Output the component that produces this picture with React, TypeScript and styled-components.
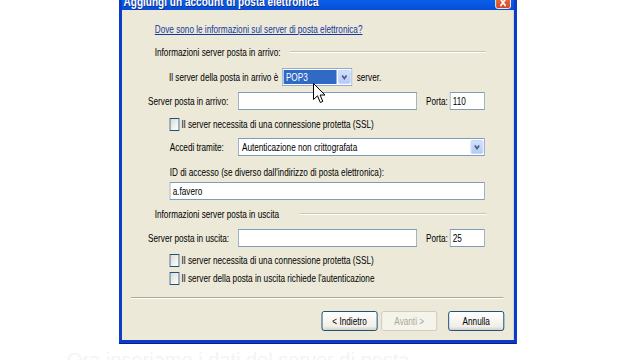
import React from 'react'
import styled, { createGlobalStyle } from 'styled-components'

// the capture is squeezed horizontally, so the window is laid out at its
// natural width and compressed with scaleX
const SCALE = 0.745

const GlobalStyle = createGlobalStyle`
  html, body {
    margin: 0;
    padding: 0;
    background: #ffffff;
    overflow: hidden;
  }
  body {
    font-family: 'Liberation Sans', Arial, sans-serif;
  }
`

const Screen = styled.div`
  position: relative;
  width: 640px;
  height: 360px;
  overflow: hidden;
  display: flex;
  flex-direction: column;
`

const DialogBox = styled.div`
  width: 398px;
  height: 343px;
  margin-left: 119px;
  flex-shrink: 0;
`

const Window = styled.div`
  width: 534px;
  box-sizing: border-box;
  transform: scaleX(${SCALE});
  transform-origin: 0 0;
  border: solid #0b3cc9;
  border-width: 0 4px 3px 4px;
  box-shadow: 0 1px 0 #0a1f8f, inset 0 -1px 0 #3b6fe0;
  background: #0a56dc;
`

const TitleBar = styled.div`
  height: 10px;
  display: flex;
  align-items: flex-end;
  justify-content: space-between;
  overflow: hidden;
  background: linear-gradient(to bottom, #0a5ee8, #0654dd 70%, #0a4bd0);
`

const Title = styled.span`
  color: #ffffff;
  font-weight: bold;
  font-size: 13.5px;
  line-height: 16px;
  padding-left: 2px;
  white-space: nowrap;
  text-shadow: 1px 1px 0 #0a2a8a;
`

const CloseButton = styled.div`
  width: 21px;
  height: 16px;
  margin: 0 4px 1px 0;
  box-sizing: border-box;
  border: 1px solid #ffffff;
  border-radius: 3px;
  background: linear-gradient(to bottom, #e8794f, #d84a1f);
  display: flex;
  align-items: flex-end;
  justify-content: center;
  padding-bottom: 1px;
`

const Content = styled.div`
  background: #ece9d8;
  height: 330px;
  display: flex;
  flex-direction: column;
  color: #000000;
  font-size: 11px;
`

const Row = styled.div<{ $mt: number; $pl?: number }>`
  display: flex;
  align-items: center;
  height: 18px;
  flex-shrink: 0;
  margin-top: ${p => p.$mt}px;
  padding-left: ${p => p.$pl ?? 0}px;
  white-space: nowrap;
`

const HelpLink = styled.span`
  color: #14389f;
  text-decoration: underline;
`

const SectionLabel = styled.span<{ $w: number }>`
  width: ${p => p.$w}px;
`

const Rule = styled.div`
  flex: 1;
  margin-right: 37px;
  height: 0;
  border-top: 1px solid #c9c6b6;
  border-bottom: 1px solid #ffffff;
`

const Label = styled.span<{ $w?: number; $ml?: number }>`
  ${p => (p.$w ? `width: ${p.$w}px;` : '')}
  margin-left: ${p => p.$ml ?? 0}px;
`

const TextBox = styled.div<{ $w: number }>`
  width: ${p => p.$w}px;
  height: 18px;
  box-sizing: border-box;
  border: 1px solid #7f9db9;
  background: #ffffff;
  display: flex;
  align-items: center;
  padding-left: 3px;
`

const Combo = styled.div<{ $w: number; $focus?: boolean }>`
  width: ${p => p.$w}px;
  height: 18px;
  box-sizing: border-box;
  border: 1px solid ${p => (p.$focus ? '#8fa9d6' : '#7f9db9')};
  background: #ffffff;
  display: flex;
`

const ComboValue = styled.div<{ $selected?: boolean }>`
  flex: 1;
  margin: 1px;
  padding-left: 3px;
  display: flex;
  align-items: center;
  background: ${p => (p.$selected ? '#316ac5' : 'transparent')};
  color: ${p => (p.$selected ? '#ffffff' : '#000000')};
`

const DropButton = styled.div`
  width: 17px;
  margin: 1px;
  box-sizing: border-box;
  border: 1px solid #bccff7;
  border-radius: 2px;
  background: linear-gradient(to bottom, #d2e0fd, #b5cbf7);
  display: flex;
  align-items: center;
  justify-content: center;
`

const CheckBox = styled.span`
  width: 13px;
  height: 13px;
  box-sizing: border-box;
  border: 1px solid #1c5180;
  background: linear-gradient(135deg, #dcdcd5, #ffffff);
`

const Separator = styled.div`
  flex-shrink: 0;
  margin: 10px 14px 0 12px;
  height: 0;
  border-top: 1px solid #aca899;
  border-bottom: 1px solid #ffffff;
`

const ButtonRow = styled.div`
  display: flex;
  justify-content: flex-end;
  margin-top: 12px;
  padding-right: 13px;
  flex-shrink: 0;
`

const Button = styled.div<{ $disabled?: boolean; $ml?: number }>`
  width: 75px;
  height: 20px;
  box-sizing: border-box;
  margin-left: ${p => p.$ml ?? 0}px;
  border: 1px solid ${p => (p.$disabled ? '#c9c7ba' : '#003c74')};
  border-radius: 3px;
  background: ${p => (p.$disabled ? '#f5f4ea' : 'linear-gradient(to bottom, #ffffff, #f0efe8 80%, #d6d0c5)')};
  color: ${p => (p.$disabled ? '#aca899' : '#000000')};
  display: flex;
  align-items: center;
  justify-content: center;
`

const Pointer = styled.svg`
  position: absolute;
  left: 313px;
  top: 83px;
`

const Caption = styled.div`
  margin: 5px 0 0 67px;
  font-size: 20px;
  line-height: 24px;
  color: #f4f4f4;
  white-space: nowrap;
`

function Chevron() {
  return (
    <svg width="9" height="7" viewBox="0 0 9 7">
      <path d="M1.5 1.5 L4.5 4.5 L7.5 1.5" fill="none" stroke="#4d6185" strokeWidth="2" />
    </svg>
  )
}

function Check({ label }: { label: string }) {
  return (
    <>
      <CheckBox />
      <Label $ml={3}>{label}</Label>
    </>
  )
}

export default function App() {
  return (
    <Screen>
      <GlobalStyle />
      <DialogBox>
        <Window>
          <TitleBar>
            <Title>Aggiungi un account di posta elettronica</Title>
            <CloseButton>
              <svg width="9" height="9" viewBox="0 0 9 9">
                <path d="M1 1 L8 8 M8 1 L1 8" stroke="#ffffff" strokeWidth="2" />
              </svg>
            </CloseButton>
          </TitleBar>
          <Content>
            <Row $mt={10} $pl={44}>
              <HelpLink>Dove sono le informazioni sul server di posta elettronica?</HelpLink>
            </Row>
            <Row $mt={5} $pl={44}>
              <SectionLabel $w={181}>Informazioni server posta in arrivo:</SectionLabel>
              <Rule />
            </Row>
            <Row $mt={7} $pl={63}>
              <Label $w={152}>Il server della posta in arrivo è</Label>
              <Combo $w={94} $focus>
                <ComboValue $selected>POP3</ComboValue>
                <DropButton><Chevron /></DropButton>
              </Combo>
              <Label $ml={6}>server.</Label>
            </Row>
            <Row $mt={6} $pl={35}>
              <Label $w={121}>Server posta in arrivo:</Label>
              <TextBox $w={240} />
              <Label $w={32} $ml={12}>Porta:</Label>
              <TextBox $w={47}>110</TextBox>
            </Row>
            <Row $mt={5} $pl={64}>
              <Check label="Il server necessita di una connessione protetta (SSL)" />
            </Row>
            <Row $mt={5} $pl={64}>
              <Label $w={92}>Accedi tramite:</Label>
              <Combo $w={331}>
                <ComboValue>Autenticazione non crittografata</ComboValue>
                <DropButton><Chevron /></DropButton>
              </Combo>
            </Row>
            <Row $mt={7} $pl={64}>
              <Label>ID di accesso (se diverso dall'indirizzo di posta elettronica):</Label>
            </Row>
            <Row $mt={1} $pl={64}>
              <TextBox $w={423}>a.favero</TextBox>
            </Row>
            <Row $mt={5} $pl={44}>
              <SectionLabel $w={195}>Informazioni server posta in uscita</SectionLabel>
              <Rule />
            </Row>
            <Row $mt={6} $pl={35}>
              <Label $w={121}>Server posta in uscita:</Label>
              <TextBox $w={240} />
              <Label $w={32} $ml={12}>Porta:</Label>
              <TextBox $w={47}>25</TextBox>
            </Row>
            <Row $mt={4} $pl={64}>
              <Check label="Il server necessita di una connessione protetta (SSL)" />
            </Row>
            <Row $mt={0} $pl={64}>
              <Check label="Il server della posta in uscita richiede l'autenticazione" />
            </Row>
            <Separator />
            <ButtonRow>
              <Button>&lt; Indietro</Button>
              <Button $disabled $ml={5}>Avanti &gt;</Button>
              <Button $ml={15}>Annulla</Button>
            </ButtonRow>
          </Content>
        </Window>
      </DialogBox>
      <Caption>Ora inseriamo i dati del server di posta</Caption>
      <Pointer width="13" height="21" viewBox="0 0 13 21">
        <path d="M0.5 0.5 L0.5 16.5 L4.5 12.8 L7.3 19.5 L9.8 18.4 L7.1 12 L12 12 Z" fill="#ffffff" stroke="#000000" strokeWidth="1" />
      </Pointer>
    </Screen>
  )
}
